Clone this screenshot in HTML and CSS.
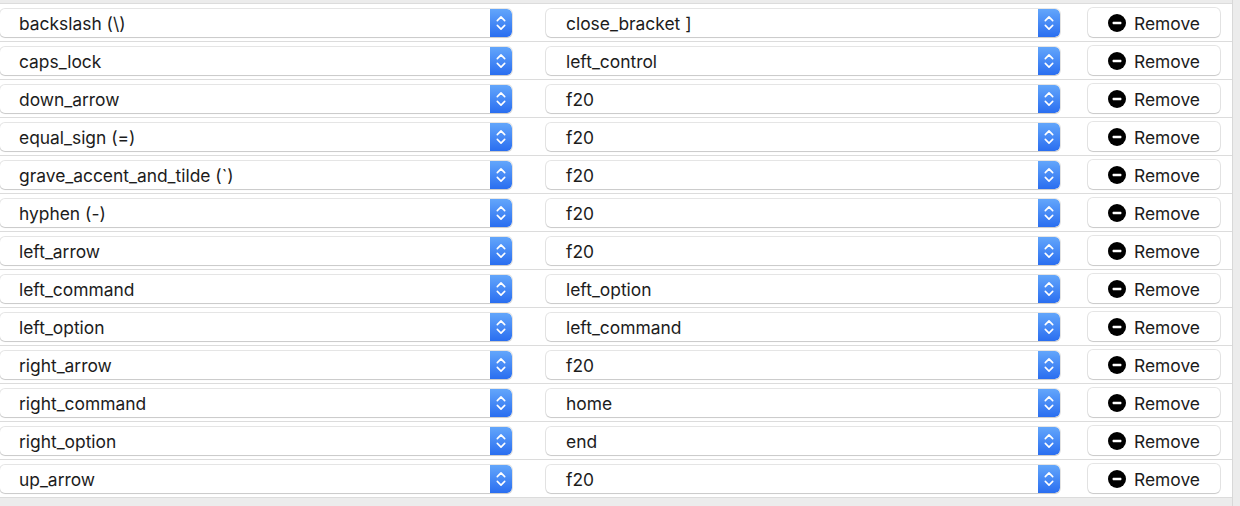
FILE: index.html
```html
<!DOCTYPE html>
<html>
<head>
<meta charset="utf-8">
<link rel="stylesheet" href="styles.css">
</head>
<body>
<svg width="0" height="0" style="position:absolute">
  <defs>
    <symbol id="chev" viewBox="0 0 22 28">
      <path d="M7.3 11.6 L11 7.9 L14.7 11.6" fill="none" stroke="#fff" stroke-width="1.6" stroke-linecap="round" stroke-linejoin="round"/>
      <path d="M7.3 16.4 L11 20.1 L14.7 16.4" fill="none" stroke="#fff" stroke-width="1.6" stroke-linecap="round" stroke-linejoin="round"/>
    </symbol>
    <symbol id="minus" viewBox="0 0 18 18">
      <circle cx="9" cy="9" r="9" fill="#000"/>
      <rect x="4.6" y="7.8" width="8.8" height="2.4" rx="0.6" fill="#fff"/>
    </symbol>
  </defs>
</svg>
<div class="frame">
  <div class="list">
    <div class="row"><div class="popup from"><span class="label">backslash (\)</span><span class="stepper"><svg width="22" height="28"><use href="#chev"/></svg></span></div><div class="popup to"><span class="label">close_bracket ]</span><span class="stepper"><svg width="22" height="28"><use href="#chev"/></svg></span></div><button class="remove"><svg width="18" height="18"><use href="#minus"/></svg><span>Remove</span></button></div>
    <div class="row"><div class="popup from"><span class="label">caps_lock</span><span class="stepper"><svg width="22" height="28"><use href="#chev"/></svg></span></div><div class="popup to"><span class="label">left_control</span><span class="stepper"><svg width="22" height="28"><use href="#chev"/></svg></span></div><button class="remove"><svg width="18" height="18"><use href="#minus"/></svg><span>Remove</span></button></div>
    <div class="row"><div class="popup from"><span class="label">down_arrow</span><span class="stepper"><svg width="22" height="28"><use href="#chev"/></svg></span></div><div class="popup to"><span class="label">f20</span><span class="stepper"><svg width="22" height="28"><use href="#chev"/></svg></span></div><button class="remove"><svg width="18" height="18"><use href="#minus"/></svg><span>Remove</span></button></div>
    <div class="row"><div class="popup from"><span class="label">equal_sign (=)</span><span class="stepper"><svg width="22" height="28"><use href="#chev"/></svg></span></div><div class="popup to"><span class="label">f20</span><span class="stepper"><svg width="22" height="28"><use href="#chev"/></svg></span></div><button class="remove"><svg width="18" height="18"><use href="#minus"/></svg><span>Remove</span></button></div>
    <div class="row"><div class="popup from"><span class="label">grave_accent_and_tilde (`)</span><span class="stepper"><svg width="22" height="28"><use href="#chev"/></svg></span></div><div class="popup to"><span class="label">f20</span><span class="stepper"><svg width="22" height="28"><use href="#chev"/></svg></span></div><button class="remove"><svg width="18" height="18"><use href="#minus"/></svg><span>Remove</span></button></div>
    <div class="row"><div class="popup from"><span class="label">hyphen (-)</span><span class="stepper"><svg width="22" height="28"><use href="#chev"/></svg></span></div><div class="popup to"><span class="label">f20</span><span class="stepper"><svg width="22" height="28"><use href="#chev"/></svg></span></div><button class="remove"><svg width="18" height="18"><use href="#minus"/></svg><span>Remove</span></button></div>
    <div class="row"><div class="popup from"><span class="label">left_arrow</span><span class="stepper"><svg width="22" height="28"><use href="#chev"/></svg></span></div><div class="popup to"><span class="label">f20</span><span class="stepper"><svg width="22" height="28"><use href="#chev"/></svg></span></div><button class="remove"><svg width="18" height="18"><use href="#minus"/></svg><span>Remove</span></button></div>
    <div class="row"><div class="popup from"><span class="label">left_command</span><span class="stepper"><svg width="22" height="28"><use href="#chev"/></svg></span></div><div class="popup to"><span class="label">left_option</span><span class="stepper"><svg width="22" height="28"><use href="#chev"/></svg></span></div><button class="remove"><svg width="18" height="18"><use href="#minus"/></svg><span>Remove</span></button></div>
    <div class="row"><div class="popup from"><span class="label">left_option</span><span class="stepper"><svg width="22" height="28"><use href="#chev"/></svg></span></div><div class="popup to"><span class="label">left_command</span><span class="stepper"><svg width="22" height="28"><use href="#chev"/></svg></span></div><button class="remove"><svg width="18" height="18"><use href="#minus"/></svg><span>Remove</span></button></div>
    <div class="row"><div class="popup from"><span class="label">right_arrow</span><span class="stepper"><svg width="22" height="28"><use href="#chev"/></svg></span></div><div class="popup to"><span class="label">f20</span><span class="stepper"><svg width="22" height="28"><use href="#chev"/></svg></span></div><button class="remove"><svg width="18" height="18"><use href="#minus"/></svg><span>Remove</span></button></div>
    <div class="row"><div class="popup from"><span class="label">right_command</span><span class="stepper"><svg width="22" height="28"><use href="#chev"/></svg></span></div><div class="popup to"><span class="label">home</span><span class="stepper"><svg width="22" height="28"><use href="#chev"/></svg></span></div><button class="remove"><svg width="18" height="18"><use href="#minus"/></svg><span>Remove</span></button></div>
    <div class="row"><div class="popup from"><span class="label">right_option</span><span class="stepper"><svg width="22" height="28"><use href="#chev"/></svg></span></div><div class="popup to"><span class="label">end</span><span class="stepper"><svg width="22" height="28"><use href="#chev"/></svg></span></div><button class="remove"><svg width="18" height="18"><use href="#minus"/></svg><span>Remove</span></button></div>
    <div class="row"><div class="popup from"><span class="label">up_arrow</span><span class="stepper"><svg width="22" height="28"><use href="#chev"/></svg></span></div><div class="popup to"><span class="label">f20</span><span class="stepper"><svg width="22" height="28"><use href="#chev"/></svg></span></div><button class="remove"><svg width="18" height="18"><use href="#minus"/></svg><span>Remove</span></button></div>
  </div>
  <div class="scroller"></div>
</div>
</body>
</html>
```

FILE: styles.css
```css
html, body {
  margin: 0;
  padding: 0;
  background: #ececec;
}
body {
  font-family: "Inter", "Liberation Sans", sans-serif;
  font-size: 17.4px;
  color: #1c1c1c;
  width: 1240px;
  height: 506px;
  overflow: hidden;
}
.frame {
  display: flex;
  height: 506px;
}
.list {
  width: 1232px;
  padding-top: 3px;
  background: #ececec;
}
.scroller {
  width: 7px;
  border-left: 1px solid #d8d8d8;
  background: #ececec;
}
.row {
  display: flex;
  align-items: center;
  height: 37px;
  border-top: 1px solid #dcdcdc;
  background: #ffffff;
}
.row:last-child {
  border-bottom: 1px solid #dcdcdc;
}
.popup {
  box-sizing: border-box;
  height: 28px;
  display: flex;
  align-items: center;
  justify-content: space-between;
  background: #fff;
  border-radius: 5px;
  box-shadow: 0 0 0 1px rgba(0,0,0,0.1), 0 1px 1px rgba(0,0,0,0.12);
  overflow: hidden;
}
.popup.from {
  width: 512px;
  padding-left: 19px;
}
.popup.to {
  width: 514px;
  margin-left: 34px;
  padding-left: 20px;
}
.label {
  white-space: nowrap;
  padding-top: 1px;
}
.stepper {
  width: 22px;
  height: 28px;
  display: flex;
  background: linear-gradient(#63a6fb, #2a6ef0);
  border-radius: 0 5px 5px 0;
}
.remove {
  margin-left: 28px;
  box-sizing: border-box;
  width: 132px;
  height: 29px;
  display: flex;
  align-items: center;
  gap: 8px;
  padding: 0 0 0 20px;
  background: #fff;
  border: none;
  border-radius: 5px;
  box-shadow: 0 0 0 1px rgba(0,0,0,0.1), 0 1px 1px rgba(0,0,0,0.12);
  font-family: inherit;
  font-size: 17.4px;
  color: #1c1c1c;
}
.remove span {
  padding-top: 1px;
}
```
